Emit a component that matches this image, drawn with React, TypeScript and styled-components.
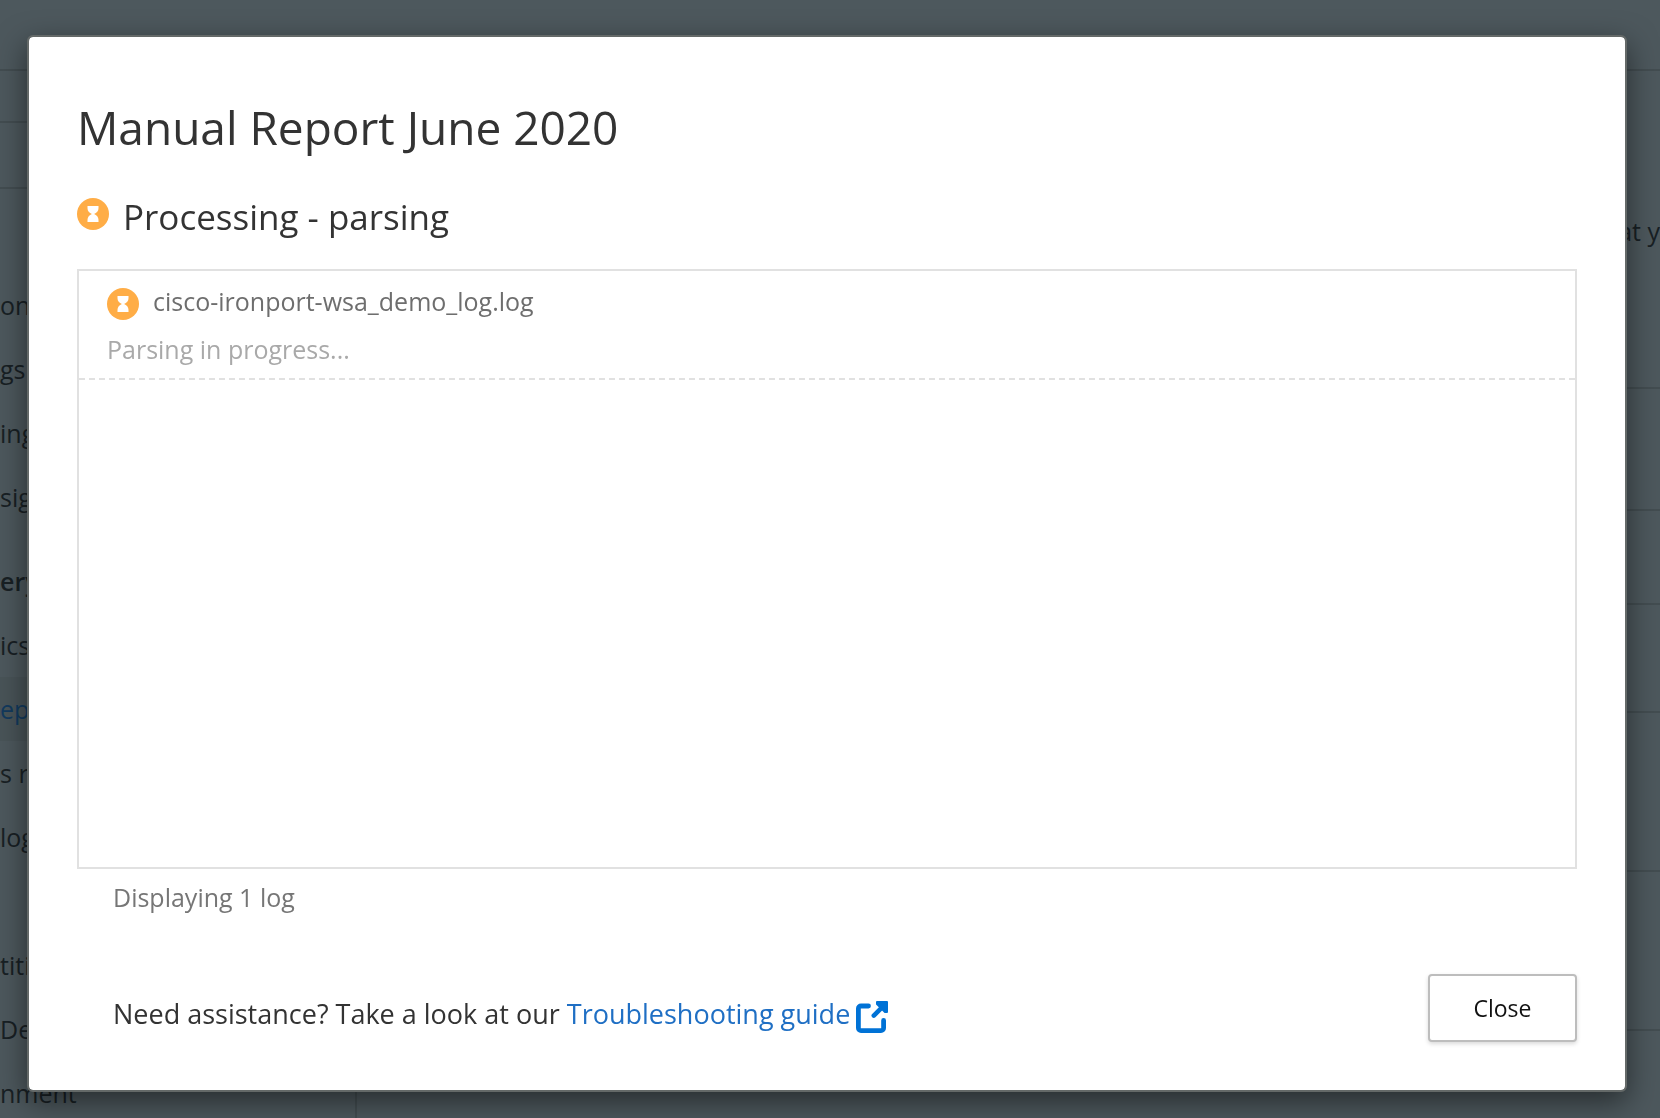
import React from "react";
import styled, { createGlobalStyle } from "styled-components";

const GlobalStyle = createGlobalStyle`
  *, *::before, *::after { box-sizing: border-box; }
  html, body, #root { height: 100%; }
  body {
    margin: 0;
    overflow: hidden;
    background: #4d585d;
    color: #333;
    font-family: "Segoe UI", "Open Sans", "Noto Sans", sans-serif;
    font-size: 25px;
  }
  h1, h2, p, ul { margin: 0; padding: 0; font-weight: 400; }
`;

const Page = styled.div`
  display: flex;
  flex-direction: column;
  height: 100%;
  color: #182024;
`;

const TopBar = styled.header`
  flex: none;
  height: 71px;
  border-bottom: 2px solid #434d51;
`;

const Columns = styled.div`
  flex: 1;
  display: flex;
  min-height: 0;
`;

const Sidebar = styled.nav`
  flex: none;
  width: 357px;
  border-right: 2px solid #434d51;
  overflow: hidden;
`;

const SidebarBand = styled.div<{ $height: number }>`
  height: ${(p) => p.$height}px;
  border-bottom: 2px solid #434d51;
`;

const Menu = styled.ul`
  list-style: none;
  padding-top: 84px;
`;

const MenuItem = styled.li<{ $heading?: boolean; $active?: boolean }>`
  height: 64px;
  margin-top: ${(p) => (p.$heading ? 20 : 0)}px;
  line-height: 64px;
  white-space: nowrap;
  font-weight: ${(p) => (p.$heading ? 600 : 400)};
  background: ${(p) => (p.$active ? "#495458" : "transparent")};
  color: ${(p) => (p.$active ? "#123a5e" : "inherit")};
`;

const Main = styled.main`
  flex: 1;
  min-width: 0;
`;

const Intro = styled.p`
  height: 318px;
  padding-top: 136px;
  line-height: 48px;
  text-align: right;
  border-bottom: 2px solid #434d51;
`;

const TableLine = styled.div<{ $height: number }>`
  height: ${(p) => p.$height}px;
  border-bottom: 2px solid #434d51;
`;

const Backdrop = styled.div`
  position: fixed;
  inset: 0;
  padding: 35px 33px 24px 27px;
`;

const Dialog = styled.section`
  padding: 58px 48px 48px;
  background: #fff;
  background-clip: padding-box;
  border: 2px solid #646968;
  border-radius: 6px;
  box-shadow: 0 10px 30px rgba(0, 0, 0, 0.5);
`;

const Title = styled.h1`
  font-size: 46px;
  line-height: 64px;
  color: #333;
`;

const Status = styled.h2`
  display: flex;
  align-items: center;
  gap: 14px;
  margin-top: 34px;
  font-size: 35px;
  line-height: 48px;
  svg { margin-bottom: 6px; }
`;

const LogList = styled.ul`
  list-style: none;
  min-height: 600px;
  margin-top: 28px;
  border: 2px solid #e1e1e1;
`;

const LogRow = styled.li`
  padding: 6px 28px 5px;
  line-height: 48px;
  border-bottom: 2px dashed #e1e1e1;
`;

const LogName = styled.div`
  display: flex;
  align-items: center;
  gap: 14px;
  color: #6e6e6e;
  svg { margin-top: 6px; }
`;

const LogState = styled.div`
  color: #a9a9a9;
`;

const Count = styled.p`
  margin-top: 4px;
  padding-left: 36px;
  line-height: 48px;
  color: #767676;
`;

const Footer = styled.footer`
  display: flex;
  justify-content: space-between;
  align-items: center;
  margin-top: 53px;
`;

const Help = styled.p`
  display: flex;
  align-items: center;
  padding: 12px 0 0 36px;
  font-size: 27px;
  line-height: 40px;
  white-space: pre;
`;

const GuideLink = styled.a`
  display: flex;
  align-items: center;
  gap: 6px;
  color: #1f6fc4;
  text-decoration: none;
  svg { margin-top: 6px; }
`;

const CloseButton = styled.button`
  width: 149px;
  height: 68px;
  padding: 0;
  background: #fff;
  border: 2px solid #bdbdbd;
  border-radius: 4px;
  box-shadow: 0 2px 4px rgba(0, 0, 0, 0.15);
  color: #111;
  font: inherit;
  font-size: 23px;
`;

const Hourglass = () => (
  <svg width="32" height="32" viewBox="0 0 32 32" aria-hidden="true">
    <circle cx="16" cy="16" r="16" fill="#ffad46" />
    <path
      d="M10.5 8h11v2.2c0 2.8-1.8 4.6-4.4 5.8 2.6 1.2 4.4 3 4.4 5.8V24h-11v-2.2c0-2.8 1.8-4.6 4.4-5.8-2.6-1.2-4.4-3-4.4-5.8z"
      fill="#fff"
    />
  </svg>
);

const OpenExternal = () => (
  <svg width="32" height="32" viewBox="0 0 32 32" aria-hidden="true">
    <path
      d="M12.5 5H5a2.6 2.6 0 0 0-2.6 2.6V27A2.6 2.6 0 0 0 5 29.6h20a2.6 2.6 0 0 0 2.6-2.6v-7.5"
      fill="none"
      stroke="#0072d6"
      strokeWidth="4.8"
      strokeLinecap="round"
    />
    <path d="M17.8 14.6 26 6.4" stroke="#0072d6" strokeWidth="4.6" strokeLinecap="round" />
    <path
      d="M21 1h10v10h-2L21 3z"
      fill="#0072d6"
      stroke="#0072d6"
      strokeWidth="2"
      strokeLinejoin="round"
    />
  </svg>
);

type Entry = { label: string; heading?: boolean; active?: boolean };

const entries: Entry[] = [
  { label: "on" },
  { label: "gs" },
  { label: "ing" },
  { label: "sig" },
  { label: "ery", heading: true },
  { label: "ics" },
  { label: "ep", active: true },
  { label: "s re" },
  { label: "log" },
  { label: "" },
  { label: "titi" },
  { label: "Def" },
  { label: "nment" },
];

const lineHeights = [122, 94, 108, 159, 159];

export default function App() {
  return (
    <>
      <GlobalStyle />
      <Page>
        <TopBar />
        <Columns>
          <Sidebar>
            <SidebarBand $height={52} />
            <SidebarBand $height={66} />
            <Menu>
              {entries.map((e, i) => (
                <MenuItem key={i} $heading={e.heading} $active={e.active}>
                  {e.label}
                </MenuItem>
              ))}
            </Menu>
          </Sidebar>
          <Main>
            <Intro>at y</Intro>
            {lineHeights.map((h, i) => (
              <TableLine key={i} $height={h} />
            ))}
          </Main>
        </Columns>
      </Page>
      <Backdrop>
        <Dialog role="dialog" aria-modal="true" aria-labelledby="report-title">
          <Title id="report-title">Manual Report June 2020</Title>
          <Status>
            <Hourglass />
            Processing - parsing
          </Status>
          <LogList>
            <LogRow>
              <LogName>
                <Hourglass />
                cisco-ironport-wsa_demo_log.log
              </LogName>
              <LogState>Parsing in progress...</LogState>
            </LogRow>
          </LogList>
          <Count>Displaying 1 log</Count>
          <Footer>
            <Help>
              {"Need assistance? Take a look at our "}
              <GuideLink href="#guide">
                Troubleshooting guide
                <OpenExternal />
              </GuideLink>
            </Help>
            <CloseButton type="button">Close</CloseButton>
          </Footer>
        </Dialog>
      </Backdrop>
    </>
  );
}
